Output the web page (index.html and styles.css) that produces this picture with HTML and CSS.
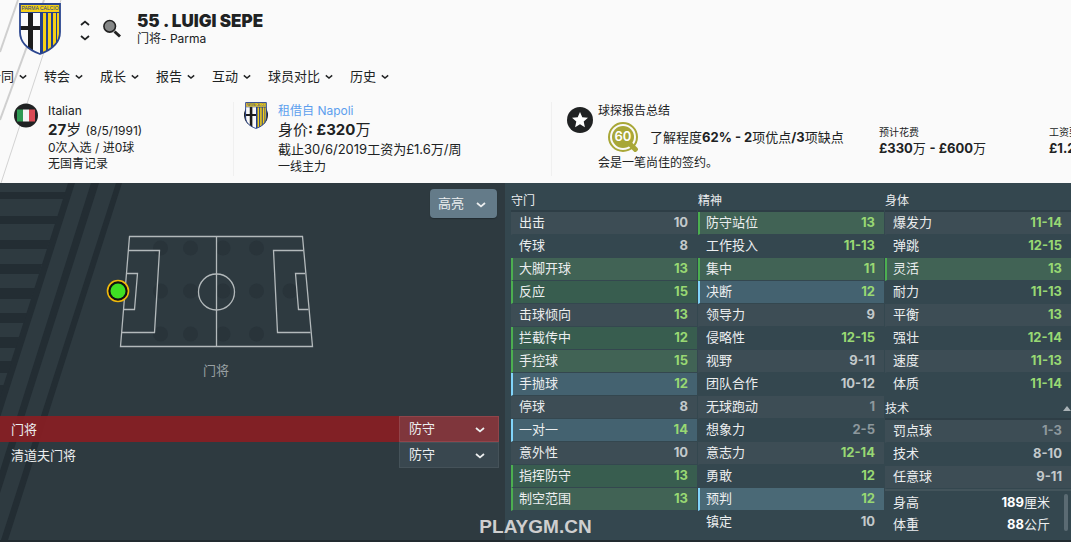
FILE: index.html
```html
<!DOCTYPE html>
<html lang="zh-CN">
<head>
  <meta charset="UTF-8" />
  <meta name="viewport" content="width=device-width, initial-scale=1" />
  <title>Luigi Sepe - Parma</title>
  <link rel="stylesheet" href="styles.css">
</head>
<body>
  <svg class="sprite" aria-hidden="true">
    <symbol id="chevron" viewBox="0 0 10 6">
      <path d="M1 1l4 3.4L9 1" fill="none" stroke="currentColor" stroke-width="1.8" />
    </symbol>
    <symbol id="shield" viewBox="0 0 42 52">
      <clipPath id="shieldClip"><path d="M1 1h40v28c0 12-9 18-20 22C10 47 1 41 1 29z" /></clipPath>
      <g clip-path="url(#shieldClip)">
        <path fill="#fafafa" d="M0 0h42v52H0z" />
        <path fill="#1c1c1c" d="M9 9h5v40H9zM0 23h21v4H0z" />
        <path fill="#233f8c" d="M21 9h21v43H21z" />
        <path fill="#f5cf17" d="M24 10h3v42h-3zM29 10h3v42h-3zM34 10h3v42h-3zM38 10h2v42h-2zM0 0h42v9H0z" />
        <path fill="#233f8c" d="M0 9h42v1H0z" />
      </g>
      <text x="21" y="7.4" text-anchor="middle" class="shield-text">PARMA CALCIO</text>
      <path d="M1 1h40v28c0 12-9 18-20 22C10 47 1 41 1 29z" fill="none" stroke="#2b468f" stroke-width="1.8" />
    </symbol>
  </svg>

  <header class="top">
    <svg class="top-lines" viewBox="0 0 70 183" aria-hidden="true">
      <path d="M18 0L0 52" stroke="#cfcfcf" stroke-width="2" />
      <path d="M44 0L0 120" stroke="#cfcfcf" stroke-width="2" />
      <path d="M61 0L1 183" stroke="#d2d2d2" />
    </svg>

    <div class="player">
      <svg class="club"><use href="#shield" /></svg>
      <div class="stepper">
        <button aria-label="上一个"><svg class="chev up"><use href="#chevron" /></svg></button>
        <button aria-label="下一个"><svg class="chev"><use href="#chevron" /></svg></button>
      </div>
      <button class="search" aria-label="搜索">
        <svg viewBox="0 0 18 19">
          <path d="M11.5 12.500l5.500 5" stroke="#222" stroke-width="3" />
          <circle cx="6.700" cy="7.300" r="5.800" fill="#858787" stroke="#222" stroke-width="1.600" />
        </svg>
      </button>
      <div class="player-name">
        <h1>55 . LUIGI SEPE</h1>
        <p>门将- Parma</p>
      </div>
    </div>

    <nav class="menu">
      <button>合同<svg class="chev"><use href="#chevron" /></svg></button>
      <button>转会<svg class="chev"><use href="#chevron" /></svg></button>
      <button>成长<svg class="chev"><use href="#chevron" /></svg></button>
      <button>报告<svg class="chev"><use href="#chevron" /></svg></button>
      <button>互动<svg class="chev"><use href="#chevron" /></svg></button>
      <button>球员对比<svg class="chev"><use href="#chevron" /></svg></button>
      <button>历史<svg class="chev"><use href="#chevron" /></svg></button>
    </nav>

    <div class="info">
      <section class="info-box nation">
        <svg class="icon" viewBox="0 0 24 24">
          <circle cx="12" cy="12" r="12" fill="#202223" />
          <path fill="#2f9a53" d="M3 6h6v12H3z" />
          <path fill="#f4f4f4" d="M9 6h6v12H9z" />
          <path fill="#d94a54" d="M15 6h6v12h-6z" />
        </svg>
        <div>
          <p>Italian</p>
          <p class="big"><b>27</b>岁 <small>(8/5/1991)</small></p>
          <p class="tight">0次入选 / 进0球</p>
          <p class="tight">无国青记录</p>
        </div>
      </section>

      <section class="info-box contract">
        <svg class="icon" viewBox="0 0 24 27">
          <circle cx="12" cy="13" r="12" fill="#202223" />
          <svg x="1" y="0" width="22" height="27"><use href="#shield" /></svg>
        </svg>
        <div>
          <p><a href="#">租借自 Napoli</a></p>
          <p class="big">身价<b>: £320</b>万</p>
          <p class="mid">截止30/6/2019工资为£1.6万/周</p>
          <p class="tight">一线主力</p>
        </div>
      </section>

      <section class="info-box scout">
        <svg class="icon star" viewBox="0 0 26 26">
          <circle cx="13" cy="13" r="13" fill="#202223" />
          <path fill="#fff" d="M13 5l2.300 5.200 5.700.6-4.300 3.800 1.200 5.600-4.900-2.900-4.900 2.900 1.200-5.600L5 10.800l5.700-.6z" />
        </svg>
        <div>
          <p>球探报告总结</p>
          <div class="scout-line">
            <svg class="score" viewBox="0 0 30 30">
              <circle cx="15" cy="15" r="14" fill="none" stroke="#a8a737" stroke-width="2" />
              <circle cx="15" cy="15" r="11" fill="#a8a737" />
              <path d="M21 21l8 8" stroke="#a8a737" stroke-width="5" />
              <text x="15" y="19" text-anchor="middle" class="score-text">60</text>
            </svg>
            <p class="mid">了解程度<b>62% - 2</b>项优点<b>/3</b>项缺点</p>
          </div>
          <p>会是一笔尚佳的签约。</p>
        </div>
      </section>

      <section class="cost">
        <h2>预计花费</h2>
        <p><b>£330</b>万 <b>- £600</b>万</p>
      </section>
      <section class="cost">
        <h2>工资要求</h2>
        <p><b>£1.2</b>万</p>
      </section>
    </div>
  </header>

  <main>
    <section class="tactics">
      <svg class="stripes" viewBox="0 0 125 357" aria-hidden="true">
        <path d="M68 0h7L-39 357h-7zM91 0h8L-15 357h-7zM116 0h6L8 357H1z" />
        <path d="M0 9h66l-3 7H0zM0 33h58l-3 8H0zM0 57h50l-3 9H0zM0 81h42l-3 10H0zM0 105h35l-4 11H0zM0 130h27l-3 10H0zM0 154h19l-3 11H0zM0 178h12l-4 12H0zM0 202h4l-4 12z" />
      </svg>

      <div class="pick highlight">
        <select aria-label="高亮"><option>高亮</option></select>
        <svg class="chev"><use href="#chevron" /></svg>
      </div>

      <figure class="pitch">
        <svg viewBox="105 234 222 116">
          <g fill="#29343a">
            <circle cx="160.500" cy="248" r="7.500" /><circle cx="190.500" cy="248" r="7.500" /><circle cx="223" cy="248" r="7.500" /><circle cx="256.500" cy="248" r="7.500" />
            <circle cx="160.500" cy="291" r="7.500" /><circle cx="190.500" cy="291" r="7.500" /><circle cx="223" cy="291" r="7.500" /><circle cx="256.500" cy="291" r="7.500" /><circle cx="290" cy="291" r="7.500" />
            <circle cx="160.500" cy="334" r="7.500" /><circle cx="190.500" cy="334" r="7.500" /><circle cx="223" cy="334" r="7.500" /><circle cx="256.500" cy="334" r="7.500" />
          </g>
          <g fill="none" stroke="#b3b9bb" stroke-width="1.300">
            <path d="M129.500 236.500h173l10 110h-192z" />
            <path d="M216.500 236v110" />
            <circle cx="216.500" cy="292" r="18" />
            <path d="M128 250.500h31.500l-5 82h-33M127 273.500h10.500l-3 36H124" />
            <path d="M303.500 250.500h-30l4 82h33M305 273.500h-9.500l3 36h10" />
          </g>
          <circle cx="118" cy="291" r="10.500" fill="#111" stroke="#f0b90b" stroke-width="1.600" />
          <circle cx="118" cy="291" r="7.500" fill="#3fe023" />
        </svg>
        <figcaption>门将</figcaption>
      </figure>

      <ul class="roles">
        <li class="selected">
          <label for="duty1">门将</label>
          <div class="pick">
            <select id="duty1"><option>防守</option></select>
            <svg class="chev"><use href="#chevron" /></svg>
          </div>
        </li>
        <li>
          <label for="duty2">清道夫门将</label>
          <div class="pick">
            <select id="duty2"><option>防守</option></select>
            <svg class="chev"><use href="#chevron" /></svg>
          </div>
        </li>
      </ul>
    </section>

    <section class="attributes">
      <div class="col">
        <table>
          <thead><tr><th colspan="2">守门</th></tr></thead>
          <tbody>
            <tr><th>出击</th><td>10</td></tr>
            <tr><th>传球</th><td>8</td></tr>
            <tr class="key"><th>大脚开球</th><td class="good">13</td></tr>
            <tr class="key"><th>反应</th><td class="good">15</td></tr>
            <tr><th>击球倾向</th><td class="good">13</td></tr>
            <tr class="key"><th>拦截传中</th><td class="good">12</td></tr>
            <tr class="key"><th>手控球</th><td class="good">15</td></tr>
            <tr class="useful"><th>手抛球</th><td class="good">12</td></tr>
            <tr><th>停球</th><td>8</td></tr>
            <tr class="useful"><th>一对一</th><td class="good">14</td></tr>
            <tr><th>意外性</th><td>10</td></tr>
            <tr class="key"><th>指挥防守</th><td class="good">13</td></tr>
            <tr class="key"><th>制空范围</th><td class="good">13</td></tr>
          </tbody>
        </table>
      </div>

      <div class="col">
        <table>
          <thead><tr><th colspan="2">精神</th></tr></thead>
          <tbody>
            <tr class="key"><th>防守站位</th><td class="good">13</td></tr>
            <tr><th>工作投入</th><td class="good">11-13</td></tr>
            <tr class="key"><th>集中</th><td class="good">11</td></tr>
            <tr class="useful"><th>决断</th><td class="good">12</td></tr>
            <tr><th>领导力</th><td>9</td></tr>
            <tr><th>侵略性</th><td class="good">12-15</td></tr>
            <tr><th>视野</th><td>9-11</td></tr>
            <tr><th>团队合作</th><td>10-12</td></tr>
            <tr><th>无球跑动</th><td class="poor">1</td></tr>
            <tr><th>想象力</th><td class="poor">2-5</td></tr>
            <tr><th>意志力</th><td class="good">12-14</td></tr>
            <tr><th>勇敢</th><td class="good">12</td></tr>
            <tr class="useful"><th>预判</th><td class="good">12</td></tr>
            <tr><th>镇定</th><td>10</td></tr>
          </tbody>
        </table>
      </div>

      <div class="col">
        <table>
          <thead><tr><th colspan="2">身体</th></tr></thead>
          <tbody>
            <tr><th>爆发力</th><td class="good">11-14</td></tr>
            <tr><th>弹跳</th><td class="good">12-15</td></tr>
            <tr class="key"><th>灵活</th><td class="good">13</td></tr>
            <tr><th>耐力</th><td class="good">11-13</td></tr>
            <tr><th>平衡</th><td class="good">13</td></tr>
            <tr><th>强壮</th><td class="good">12-14</td></tr>
            <tr><th>速度</th><td class="good">11-13</td></tr>
            <tr><th>体质</th><td class="good">11-14</td></tr>
          </tbody>
        </table>
        <table class="technical">
          <thead><tr><th>技术</th><th class="sort"><svg viewBox="0 0 8 5"><path d="M4 0l4 5H0z" fill="#aab3b7" /></svg></th></tr></thead>
          <tbody>
            <tr><th>罚点球</th><td class="poor">1-3</td></tr>
            <tr><th>技术</th><td>8-10</td></tr>
            <tr><th>任意球</th><td>9-11</td></tr>
          </tbody>
        </table>
        <div class="physique">
          <dl>
            <div><dt>身高</dt><dd><b>189</b>厘米</dd></div>
            <div><dt>体重</dt><dd><b>88</b>公斤</dd></div>
          </dl>
          <span class="scrollbar"></span>
        </div>
      </div>
    </section>
  </main>

  <div class="watermark">PLAYGM.CN</div>
</body>
</html>
```

FILE: styles.css
```css
* {
  box-sizing: border-box;
}

body {
  font-family: Inter, "Noto Sans CJK SC", sans-serif;
  font-size: 13px;
  margin: 0;
  min-height: 100vh;
  display: flex;
  flex-direction: column;
  position: relative;
  background-color: #222b30;
  color: #202223;
  overflow: hidden;
}

h1, h2, p, ul, dl, dd, figure {
  margin: 0;
  padding: 0;
}

button, select {
  font: inherit;
  color: inherit;
  background: none;
  border: none;
  margin: 0;
  padding: 0;
  cursor: pointer;
}

svg {
  display: block;
}

.sprite {
  position: absolute;
  width: 0;
  height: 0;
}

.chev {
  width: 10px;
  height: 6px;
}

.chev.up {
  transform: rotate(180deg);
}

/* header */
.top {
  position: relative;
  background-color: #fafafa;
  padding-bottom: 7px;
  white-space: nowrap;
  overflow: hidden;
}

.top-lines {
  position: absolute;
  left: 0;
  top: 0;
  width: 70px;
  height: 183px;
}

.player {
  position: relative;
  display: flex;
  align-items: flex-start;
  padding: 3px 0 0 19px;
}

.club {
  width: 42px;
  height: 52px;
}

.shield-text {
  font: 5px "Liberation Sans", sans-serif;
  fill: #233f8c;
}

.stepper {
  display: flex;
  flex-direction: column;
  gap: 9px;
  margin: 17px 13px 0 19px;
}

.search svg {
  width: 18px;
  height: 19px;
  margin-top: 16px;
}

.player-name {
  margin: 8px 0 0 16px;
}

.player-name h1 {
  font-size: 17px;
  line-height: 20px;
  font-weight: 900;
}

.player-name p {
  font-size: 12px;
  line-height: 16px;
}

.menu {
  position: relative;
  display: flex;
  gap: 17px;
  margin: 11px 0 0 -12px;
}

.menu button {
  display: flex;
  align-items: center;
  gap: 5px;
  line-height: 20px;
}

.menu .chev {
  width: 8px;
  margin-top: 2px;
}

.info {
  position: relative;
  display: grid;
  grid-template-columns: 234fr 318fr 327fr 170fr 22fr;
  margin-top: 16px;
  height: 74px;
}

.info > * {
  min-width: 0;
}

.info-box {
  display: flex;
  align-items: flex-start;
  gap: 10px;
  padding-left: 14px;
  font-size: 12px;
  line-height: 18px;
}

.nation, .contract {
  border-right: 1px solid #f0f0f0;
}

.contract {
  padding-left: 10px;
}

.scout {
  gap: 5px;
  padding-left: 15px;
}

.icon {
  flex: none;
  width: 24px;
  height: 27px;
}

.icon.star {
  width: 26px;
  height: 26px;
  margin-top: 5px;
}

.big {
  font-size: 15px;
  line-height: 19px;
}

.big small {
  font-size: 12px;
}

.mid {
  font-size: 13px;
  line-height: 20px;
}

.tight {
  line-height: 16px;
}

.info a {
  color: #5d9fee;
  text-decoration: none;
}

.scout-line {
  display: flex;
  align-items: center;
  gap: 12px;
  padding-left: 10px;
}

.score {
  width: 30px;
  height: 30px;
  margin: 2px 0;
}

.score-text {
  font-size: 13px;
  font-weight: 600;
  fill: #fff;
}

.cost {
  padding-top: 22px;
}

.cost h2 {
  font-size: 10px;
  line-height: 16px;
  font-weight: 400;
}

.cost p {
  line-height: 16px;
}

/* main panels */
main {
  flex: 1;
  display: grid;
  grid-template-columns: 505fr 566fr;
  margin-bottom: 2px;
  color: #eceeef;
}

.tactics {
  position: relative;
  background-color: #2e3a40;
  padding-top: 6px;
}

.stripes {
  position: absolute;
  left: 0;
  top: 0;
  width: 125px;
  height: 357px;
  fill: #232d33;
}

.pick {
  position: relative;
}

.pick select {
  appearance: none;
  width: 100%;
  height: 100%;
  padding: 0 0 2px 9px;
}

.pick .chev {
  position: absolute;
  right: 13px;
  top: 50%;
  margin-top: -2px;
  pointer-events: none;
}

.highlight {
  width: 67px;
  height: 29px;
  margin: 0 8px 0 auto;
  background-color: #647b89;
  border-radius: 4px;
  box-shadow: 0 1px 1px #222c31;
}

.highlight select {
  padding-left: 8px;
}

.highlight .chev {
  right: 11px;
}

.pitch {
  position: relative;
  width: 222px;
  margin: 16px 0 0 105px;
}

.pitch figcaption {
  margin-top: 10px;
  line-height: 20px;
  text-align: center;
  color: #98a0a3;
}

.roles {
  position: relative;
  list-style: none;
  margin: 36px 6px 0 0;
}

.roles li {
  display: flex;
  align-items: center;
  height: 26px;
}

.roles label {
  flex: 1;
  padding: 0 0 2px 11px;
}

.roles .pick {
  width: 100px;
  height: 26px;
  background-color: #39474f;
  border: 1px solid #455259;
}

.roles .selected {
  background-color: rgba(139, 30, 34, 0.9);
}

.roles .selected .pick {
  background-color: #7f363c;
  border-color: #91444a;
}

.attributes {
  display: grid;
  grid-template-columns: 186fr 186fr 186fr;
  gap: 1px;
  padding-left: 6px;
  background-color: #34474f;
}

table {
  width: 100%;
  border-spacing: 0;
}

thead th {
  height: 29px;
  padding: 0;
  font-size: 12px;
  line-height: 18px;
  font-weight: 400;
  text-align: left;
  vertical-align: bottom;
  border-bottom: 2px solid #2e3e46;
}

.technical thead th {
  height: 24px;
}

.sort svg {
  width: 8px;
  height: 5px;
  margin: 0 0 7px auto;
}

tbody th, tbody td {
  height: 23px;
  padding: 0 9px 0 6px;
  line-height: 20px;
  vertical-align: top;
  border-bottom: 1px solid #34474f;
}

tbody th {
  font-weight: 400;
  text-align: left;
  border-left: 2px solid transparent;
}

tbody td {
  font-weight: 700;
  text-align: right;
  color: #c3c9cb;
}

tbody tr:nth-child(odd) {
  background-color: #3d4d55;
}

tbody .key, tbody .key:nth-child(even) {
  background-color: #385d4f;
}

tbody .key:nth-child(odd) {
  background-color: #416355;
}

tbody .useful {
  background-color: #446270;
}

tbody .useful:nth-child(odd) {
  background-color: #4a6976;
}

.key th {
  border-left-color: #4caf50;
}

.useful th {
  border-left-color: #81d4fa;
}

td.good {
  color: #98d873;
}

td.poor {
  color: #8d989d;
}

.physique {
  display: flex;
  align-items: flex-start;
  gap: 14px;
  padding-right: 3px;
  border-top: 2px solid #43545b;
}

.physique dl {
  flex: 1;
  padding-left: 8px;
}

.physique dl div {
  display: flex;
  justify-content: space-between;
  line-height: 22px;
}

.physique b {
  color: #fff;
}

.scrollbar {
  width: 4px;
  height: 37px;
  margin-top: 3px;
  border-radius: 2px;
  background-color: #5b6b73;
}

.watermark {
  position: absolute;
  left: 0;
  right: 0;
  bottom: 4px;
  text-align: center;
  font: bold 19px "Liberation Sans Narrow", "Liberation Sans", sans-serif;
  color: #cfcfcf;
  pointer-events: none;
}
```
